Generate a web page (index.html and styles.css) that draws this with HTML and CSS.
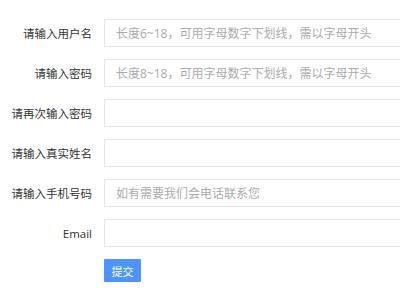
FILE: index.html
```html
<!DOCTYPE html>
<html lang="zh">
<head>
<meta charset="utf-8">
<link rel="stylesheet" href="styles.css">
</head>
<body>
<form class="form">
  <div class="row"><label class="label">请输入用户名</label><input class="input" type="text" placeholder="长度6~18，可用字母数字下划线，需以字母开头"></div>
  <div class="row"><label class="label">请输入密码</label><input class="input" type="text" placeholder="长度8~18，可用字母数字下划线，需以字母开头"></div>
  <div class="row"><label class="label">请再次输入密码</label><input class="input" type="text"></div>
  <div class="row"><label class="label">请输入真实姓名</label><input class="input" type="text"></div>
  <div class="row"><label class="label">请输入手机号码</label><input class="input" type="text" placeholder="如有需要我们会电话联系您"></div>
  <div class="row"><label class="label">Email</label><input class="input" type="text"></div>
  <div class="row"><span class="label"></span><button class="btn" type="button">提交</button></div>
</form>
</body>
</html>
```

FILE: styles.css
```css
html, body {
  margin: 0;
  padding: 0;
  background: #fff;
  overflow: hidden;
}
body {
  font-family: "Open Sans", "Noto Sans CJK SC", sans-serif;
  font-size: 12px;
  color: #333;
}
.form {
  display: flex;
  flex-direction: column;
  gap: 12px;
  padding-top: 19px;
}
.row {
  display: flex;
  align-items: center;
  gap: 12px;
}
.label {
  width: 92px;
  flex: none;
  text-align: right;
  font-size: 11.5px;
  color: #333;
}
.input {
  box-sizing: border-box;
  width: 330px;
  height: 28px;
  flex: none;
  margin: 0;
  padding: 0 11px;
  border: 1px solid #e6e6e6;
  border-radius: 1px;
  font-family: "Open Sans", "Noto Sans CJK SC", sans-serif;
  font-size: 12px;
  color: #333;
  outline: none;
}
.input::placeholder {
  color: #aaa;
}
.btn {
  box-sizing: border-box;
  width: 37px;
  height: 23px;
  margin: 0;
  padding: 0;
  border: none;
  border-radius: 1px;
  background: #4d94fd;
  color: #fff;
  font-family: "Noto Sans CJK SC", sans-serif;
  font-size: 11px;
}
```
